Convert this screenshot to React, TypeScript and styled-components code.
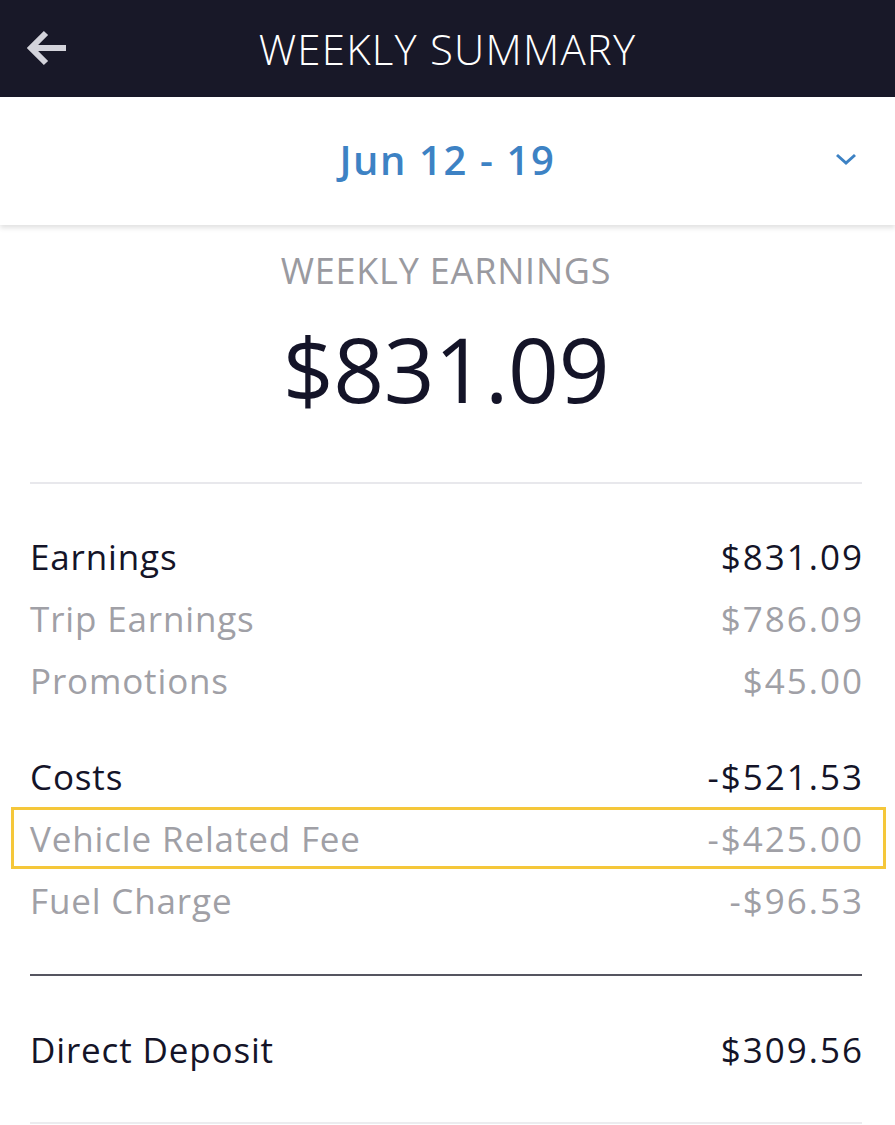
import React from 'react';
import styled, { createGlobalStyle } from 'styled-components';

const GlobalStyle = createGlobalStyle`
    html, body {
        margin: 0;
        padding: 0;
        background: #ffffff;
    }
    body {
        font-family: 'Open Sans', 'Noto Sans', sans-serif;
        -webkit-font-smoothing: antialiased;
    }
`;

type Line = {
    label: string;
    amount: string;
    main?: boolean;
    marked?: boolean;
};

const earnings: Line[] = [
    { label: 'Earnings', amount: '$831.09', main: true },
    { label: 'Trip Earnings', amount: '$786.09' },
    { label: 'Promotions', amount: '$45.00' },
];

const costs: Line[] = [
    { label: 'Costs', amount: '-$521.53', main: true },
    { label: 'Vehicle Related Fee', amount: '-$425.00', marked: true },
    { label: 'Fuel Charge', amount: '-$96.53' },
];

const BackArrow = () => (
    <svg width="44" height="44" viewBox="0 0 44 44" fill="none">
        <path d="M41 22H7M21 7L6 22l15 15" stroke="#d3d3db" strokeWidth="6" strokeLinejoin="miter" />
    </svg>
);

const Chevron = () => (
    <svg width="22" height="14" viewBox="0 0 22 14" fill="none">
        <path d="M2 3l9 8 9-8" stroke="#3d82c4" strokeWidth="3" />
    </svg>
);

const App = () => {
    const renderLines = (lines: Line[]) =>
        lines.map((l) => (
            <Row key={l.label} main={l.main} marked={l.marked}>
                <Label>{l.label}</Label>
                <Amount>{l.amount}</Amount>
            </Row>
        ));

    return (
        <Screen>
            <GlobalStyle />
            <TopBar>
                <BackButton>
                    <BackArrow />
                </BackButton>
                <Title>WEEKLY SUMMARY</Title>
            </TopBar>
            <DateBar>
                <DateLabel>Jun 12 - 19</DateLabel>
                <ChevronSlot>
                    <Chevron />
                </ChevronSlot>
            </DateBar>
            <Hero>
                <HeroLabel>WEEKLY EARNINGS</HeroLabel>
                <HeroAmount>$831.09</HeroAmount>
            </Hero>
            <Breakdown>
                <Group>{renderLines(earnings)}</Group>
                <Group>{renderLines(costs)}</Group>
            </Breakdown>
            <Total>
                <Row main>
                    <Label>Direct Deposit</Label>
                    <Amount>$309.56</Amount>
                </Row>
            </Total>
        </Screen>
    );
};

const Screen = styled.div`
    width: 895px;
    min-height: 1125px;
    background: #ffffff;
    overflow: hidden;
`;

const TopBar = styled.div`
    height: 97px;
    background: #181828;
    display: flex;
    align-items: center;
    justify-content: center;
    position: relative;
`;

const BackButton = styled.div`
    position: absolute;
    left: 25px;
    top: 26px;
    display: flex;
`;

const Title = styled.div`
    color: #ffffff;
    font-size: 42px;
    font-weight: 300;
    letter-spacing: 1.2px;
`;

const DateBar = styled.div`
    height: 128px;
    display: flex;
    align-items: center;
    justify-content: center;
    position: relative;
    box-shadow: 0 3px 5px rgba(0, 0, 0, 0.12);
`;

const DateLabel = styled.div`
    color: #3d82c4;
    font-size: 40px;
    font-weight: 600;
    letter-spacing: 1.6px;
    margin-top: -3px;
`;

const ChevronSlot = styled.div`
    position: absolute;
    right: 38px;
    top: 55px;
    display: flex;
`;

const Hero = styled.div`
    margin: 0 33px 0 30px;
    padding-top: 26px;
    height: 259px;
    box-sizing: border-box;
    border-bottom: 2px solid #e8e8ec;
    display: flex;
    flex-direction: column;
    align-items: center;
`;

const HeroLabel = styled.div`
    color: #9a9aa0;
    font-size: 36px;
    line-height: 40px;
    letter-spacing: 0.8px;
`;

const HeroAmount = styled.div`
    color: #141428;
    font-size: 89px;
    line-height: 100px;
    margin-top: 28px;
    letter-spacing: -0.3px;
`;

const Breakdown = styled.div`
    padding: 41px 0 0;
    margin: 0 33px 0 30px;
    height: 492px;
    box-sizing: border-box;
    border-bottom: 2px solid #555560;
    display: flex;
    flex-direction: column;
    gap: 34px;
`;

const Group = styled.div`
    display: flex;
    flex-direction: column;
`;

const Label = styled.span`
    letter-spacing: 0.85px;
`;

const Amount = styled.span`
    letter-spacing: 2px;
    margin-right: -2px;
`;

const Row = styled.div<{ main?: boolean; marked?: boolean }>`
    display: flex;
    justify-content: space-between;
    align-items: center;
    height: 62px;
    font-size: 35px;
    color: ${(p) => (p.main ? '#141428' : '#a0a0a6')};
    position: relative;

    ${(p) =>
        p.marked &&
        `
        &::before {
            content: '';
            position: absolute;
            left: -19px;
            right: -24px;
            top: 0;
            bottom: 0;
            border: 3px solid #f5c73a;
        }
    `}
`;

const Total = styled.div`
    margin: 0 33px 0 30px;
    padding-top: 42px;
    height: 148px;
    box-sizing: border-box;
    border-bottom: 2px solid #ececef;
`;

export default App;
